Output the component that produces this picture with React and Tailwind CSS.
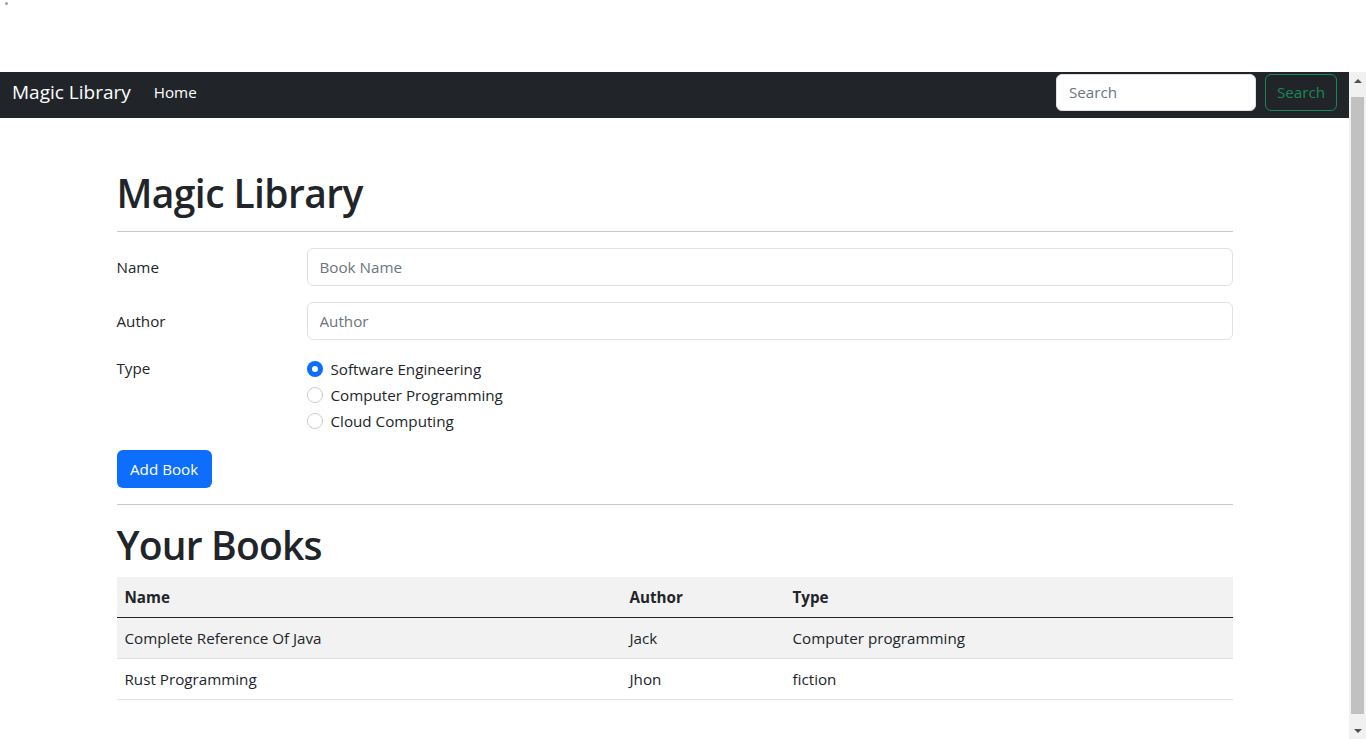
import { useState } from "react";

const books = [
  { name: "Complete Reference Of Java", author: "Jack", type: "Computer programming" },
  { name: "Rust Programming", author: "Jhon", type: "fiction" },
];

const types = ["Software Engineering", "Computer Programming", "Cloud Computing"];

function Radio({ label, checked, onChange }) {
  return (
    <label className="flex items-center h-[26px] cursor-pointer">
      <span
        className={
          checked
            ? "w-4 h-4 rounded-full bg-[#0d6efd] flex items-center justify-center"
            : "w-4 h-4 rounded-full border border-[#c8ccd0] bg-white"
        }
      >
        {checked && <span className="w-[6px] h-[6px] rounded-full bg-white" />}
      </span>
      <input type="radio" className="hidden" checked={checked} onChange={onChange} />
      <span className="ml-2 text-[#212529]">{label}</span>
    </label>
  );
}

export default function App() {
  const [type, setType] = useState(types[0]);

  return (
    <div
      className="h-[739px] w-full flex flex-col overflow-hidden bg-white text-[#212529] text-[15.2px] leading-[24px]"
      style={{ fontFamily: "'Open Sans', 'Noto Sans', sans-serif" }}
    >
      {/* area above the page */}
      <div className="h-[72px] shrink-0 relative">
        <span className="absolute left-[5px] top-[2px] w-[3px] h-[3px] rounded-full bg-gray-400" />
      </div>

      <div className="flex flex-1 min-h-0">
        <div className="flex-1 min-w-0">
          {/* Navbar */}
          <nav className="h-[46px] bg-[#212529] flex items-center pl-3 pr-3 pb-[6px]">
            <span className="text-white text-[19px] mr-[23px]">Magic Library</span>
            <span className="text-white">Home</span>
            <div className="ml-auto flex items-center gap-[9px]">
              <input
                className="w-[200px] h-[37px] rounded-[6px] bg-white border border-[#dee2e6] px-3 text-[#212529] placeholder-[#6c757d] outline-none"
                placeholder="Search"
              />
              <button className="h-[37px] w-[72px] rounded-[6px] border border-[#198754] text-[#198754]">
                Search
              </button>
            </div>
          </nav>

          {/* Content */}
          <div className="w-[1116px] mx-auto pt-[51px]">
            <h1 className="text-[39px] leading-[48px] font-semibold tracking-[-0.6px]">Magic Library</h1>
            <hr className="mt-[14px] mb-4 border-t border-[#c8c9ca]" />

            <div className="flex items-center mb-4">
              <label className="w-[190px]">Name</label>
              <input
                className="flex-1 h-[38px] border border-[#dee2e6] rounded-[6px] px-3 placeholder-[#6c757d] outline-none"
                placeholder="Book Name"
              />
            </div>
            <div className="flex items-center mb-4">
              <label className="w-[190px]">Author</label>
              <input
                className="flex-1 h-[38px] border border-[#dee2e6] rounded-[6px] px-3 placeholder-[#6c757d] outline-none"
                placeholder="Author"
              />
            </div>
            <div className="flex mb-4">
              <span className="w-[190px]">Type</span>
              <div className="flex flex-col">
                {types.map((t) => (
                  <Radio key={t} label={t} checked={type === t} onChange={() => setType(t)} />
                ))}
              </div>
            </div>

            <button className="h-[38px] px-[13.5px] rounded-[6px] bg-[#0d6efd] text-white">Add Book</button>
            <hr className="mt-4 mb-4 border-t border-[#c8c9ca]" />

            <h2 className="text-[39px] leading-[48px] font-semibold tracking-[-0.8px] mb-[8px]">Your Books</h2>
            <table className="w-full text-left border-collapse">
              <thead>
                <tr className="bg-[#f2f2f2] border-b border-[#212529]">
                  <th className="h-[40px] px-2 font-bold w-[505px]">Name</th>
                  <th className="px-2 font-bold w-[163px]">Author</th>
                  <th className="px-2 font-bold">Type</th>
                </tr>
              </thead>
              <tbody>
                {books.map((b, i) => (
                  <tr
                    key={b.name}
                    className={i % 2 === 0 ? "bg-[#f2f2f2] border-b border-[#dee2e6]" : "border-b border-[#dee2e6]"}
                  >
                    <td className="h-[41px] px-2">{b.name}</td>
                    <td className="px-2">{b.author}</td>
                    <td className="px-2">{b.type}</td>
                  </tr>
                ))}
              </tbody>
            </table>
          </div>
        </div>

        {/* Scrollbar */}
        <div className="w-[17px] shrink-0 bg-[#f1f1f1] flex flex-col items-center">
          <div className="h-[17px] flex items-center justify-center">
            <span className="w-0 h-0 border-l-[4px] border-r-[4px] border-b-[4px] border-l-transparent border-r-transparent border-b-[#505050]" />
          </div>
          <div className="w-[13px] flex-1 bg-[#c1c1c1] mt-[8px] mb-[8px]" />
          <div className="h-[17px] flex items-center justify-center">
            <span className="w-0 h-0 border-l-[4px] border-r-[4px] border-t-[4px] border-l-transparent border-r-transparent border-t-[#505050]" />
          </div>
        </div>
      </div>
    </div>
  );
}
